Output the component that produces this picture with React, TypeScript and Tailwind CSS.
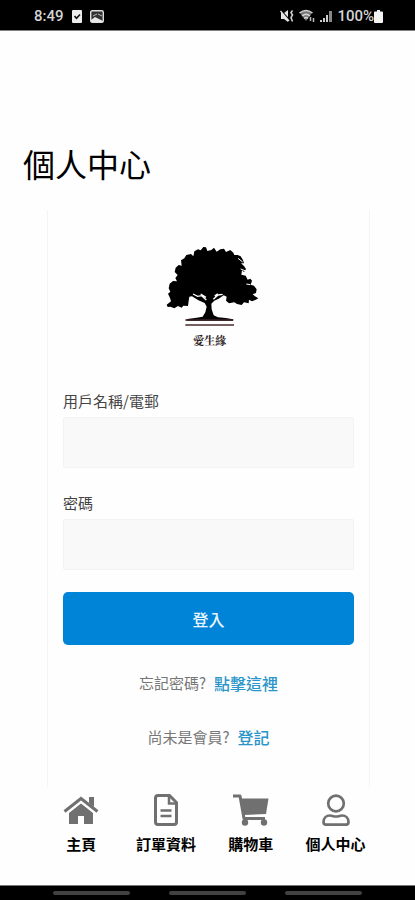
import type { ReactNode } from 'react';

function StatusBar() {
  return (
    <header className="flex h-[31px] items-center justify-between border-b border-[#808080] bg-black pt-0.5 pr-8 pl-[34px] font-['Roboto',sans-serif] text-[15px] leading-5 font-medium text-[#d4d4d4]">
      <div className="flex items-center gap-2">
        <span>8:49</span>
        <svg viewBox="0 0 10 13" className="h-[13px] w-[10px]" aria-hidden="true">
          <rect width="10" height="13" rx="1" fill="#ededed" />
          <path d="M2.500 6l2 2.300L8 4.500" fill="none" stroke="#111" strokeWidth="1.600" />
        </svg>
        <svg viewBox="0 0 14 13" className="h-[13px] w-[14px]" aria-hidden="true">
          <rect x="0.700" y="0.700" width="12.600" height="11.600" rx="1.500" fill="#333" stroke="#dedede" strokeWidth="1.400" />
          <path d="M1 12V10l4-3 3 1.500L13 11v1z" fill="#e8e8e8" />
          <path d="M3 6l4-2M8 4l4 2" stroke="#bbb" />
        </svg>
      </div>
      <div className="flex items-center gap-[5px]">
        <svg viewBox="0 0 14 14" className="h-[14px] w-[14px]" aria-hidden="true">
          <path d="M1 4h3l4-3v12L4 10H1z" fill="#e5e5e5" />
          <path d="M1 1.500l8.500 9.500" stroke="#000" strokeWidth="1.500" />
          <path d="M0.500 2l8.500 10" stroke="#e5e5e5" strokeWidth="1.300" />
          <path d="M12.500 1.500l-1.500 2 1.500 2.500-1.500 2.500 1.500 4" fill="none" stroke="#ccc" strokeWidth="1.600" />
        </svg>
        <svg viewBox="0 0 16 14" className="h-[14px] w-[16px]" aria-hidden="true">
          <path d="M1 4q6-5 12 0L7 12z" fill="#777" />
          <path d="M0.500 4q6.500-5 13 0M3 7q4-3.500 8 0M5 9.500q2-2 4 0" fill="none" stroke="#d5d5d5" strokeWidth="1.500" />
          <path d="M11.500 8v4M14.500 9v4" stroke="#bbb" strokeWidth="1.500" />
        </svg>
        <svg viewBox="0 0 12 14" className="h-[14px] w-[12px]" aria-hidden="true">
          <path d="M0 11h2v2H0zM3 9h2v4H3zM6 6h2v7H6z" fill="#ccc" />
          <path d="M9 2h3v11H9z" fill="#888" />
        </svg>
        <div className="flex items-center">
          <span>100%</span>
          <svg viewBox="0 0 9 13" className="h-[13px] w-[9px]" aria-hidden="true">
            <path d="M3 0h3v1.500h2q1 0 1 1V12q0 1-1 1H1q-1 0-1-1V2.500q0-1 1-1h2z" fill="#f4f4f4" />
          </svg>
        </div>
      </div>
    </header>
  );
}

function Logo() {
  return (
    <svg viewBox="0 0 300 330" className="h-[110px] w-[100px]" role="img" aria-label="愛生緣">
      <path
        d="M14 176L27 166 24 156 18 143 25 137 20 127 23 113 33 105 45 106 40 96 47 87 38 78 41 65 50 57 59 59 57 43 67 37 73 27 87 24 94 31 97 16 108 10 116 13 124 3 132 4 136 15 148 12 156 5 164 17 175 10 186 8 192 18 205 12 214 20 217 27 227 27 236 31 243 42 246 52 237 52 246 60 252 69 246 78 240 73 238 86 251 89 257 101 265 98 270 104 266 116 276 119 284 130 282 141 272 145 279 151 289 157 280 162 270 166 261 161 260 172 246 169 239 177 225 174 217 169 201 172 192 164 194 152 185 148 170 158 157 164 148 173 149 190 155 208 168 214 191 216 213 220 213 224H73L76 219 104 215 122 212 130 199 134 182 128 171 109 163 90 151 82 152 80 165 78 180 64 179 59 185 48 180 37 187 25 182 17 183z"
        fill="#000"
      />
      <path
        d="M93 144L107 151 119 149 133 162M154 160L168 147 182 145M116 144L132 154M158 150L167 143"
        fill="none"
        stroke="#fff"
        strokeWidth="4"
      />
      <path
        d="M228 37L242 48M251 75L236 69M265 116L253 114"
        fill="none"
        stroke="#fff"
        strokeWidth="3"
      />
      <path d="M70 222H214" stroke="#3d2224" strokeWidth="5" />
      <path d="M70 237H216" stroke="#4a292b" strokeWidth="5" />
      <text
        x="143"
        y="297"
        textAnchor="middle"
        fontSize="33"
        fontWeight="700"
        fontFamily="'Noto Serif CJK TC', 'Noto Sans CJK TC', serif"
        fill="#2b2222"
      >
        愛生緣
      </text>
    </svg>
  );
}

function Field({ id, label, type }: { id: string; label: string; type: string }) {
  return (
    <div className="mb-[22px]">
      <label htmlFor={id} className="block h-[29px] text-[15px] leading-[26px] text-[#444]">
        {label}
      </label>
      <input
        id={id}
        type={type}
        className="block h-[51px] w-full rounded-xs border border-[#f3f3f3] bg-[#f9f9f9] px-3 text-base outline-none"
      />
    </div>
  );
}

function LinkRow({ question, link }: { question: string; link: string }) {
  return (
    <p className="flex h-[54px] items-center justify-center gap-2 text-[15px] text-[#777]">
      <span>{question}</span>
      <a href="#" className="text-base font-medium text-[#2b95c9]">
        {link}
      </a>
    </p>
  );
}

function HomeIcon() {
  return (
    <svg viewBox="0 0 36 32" className="h-8 w-9" fill="currentColor" aria-hidden="true">
      <path d="M26 3h5v10l-5-4z" />
      <path d="M1.500 17.500L18 4.500l16.500 13" fill="none" stroke="currentColor" strokeWidth="3" />
      <path d="M18 9.500l12 9.500v11h-9v-8h-6v8H6V19z" />
    </svg>
  );
}

function DocumentIcon() {
  return (
    <svg viewBox="0 0 24 32" className="h-8 w-6" fill="none" stroke="currentColor" aria-hidden="true">
      <path d="M4 1.500h11.500l7 7V28q0 2.500-2.500 2.500H4Q1.500 30.500 1.500 28V4Q1.500 1.500 4 1.500z" strokeWidth="3" />
      <path d="M15 2v7.500h7.500" strokeWidth="2.500" />
      <path d="M6.500 16.500h11M6.500 22h11" strokeWidth="2.500" />
    </svg>
  );
}

function CartIcon() {
  return (
    <svg viewBox="0 0 36 32" className="h-8 w-9" fill="currentColor" aria-hidden="true">
      <path d="M0 2h7l4 22.500h21" fill="none" stroke="currentColor" strokeWidth="3" strokeLinejoin="round" />
      <path d="M7 4.500h28.500L33 20l-23 1z" />
      <circle cx="12" cy="28.500" r="3.200" />
      <circle cx="31" cy="28.500" r="3.200" />
    </svg>
  );
}

function UserIcon() {
  return (
    <svg viewBox="0 0 28 32" className="h-8 w-7" fill="none" stroke="currentColor" strokeWidth="2.700" aria-hidden="true">
      <circle cx="14" cy="9.500" r="7.800" />
      <path
        d="M8 21.500c2 0 3 1 6 1s4-1 6-1c4 0 6.500 3 6.500 6.500q0 2.700-2.500 2.700H4q-2.500 0-2.500-2.700C1.500 24.500 4 21.500 8 21.500z"
        strokeLinejoin="round"
      />
    </svg>
  );
}

function NavItem({ label, icon }: { label: string; icon: ReactNode }) {
  return (
    <a href="#" className="flex flex-col items-center text-[#707070]">
      {icon}
      <span className="mt-2 text-[15px] leading-5 font-bold whitespace-nowrap text-black">{label}</span>
    </a>
  );
}

export default function App() {
  return (
    <div className="flex min-h-screen flex-col bg-[#fefefe] font-['Noto_Sans_CJK_TC',sans-serif]">
      <StatusBar />
      <main className="flex grow flex-col">
        <h1 className="mt-[108px] ml-[23px] text-[32px] leading-12 text-black">個人中心</h1>
        <form
          className="mr-[45px] ml-[47px] mt-[23px] border-x border-[#f4f4f4] px-[15px] pt-9 pb-[23px]"
          onSubmit={(event) => event.preventDefault()}
        >
          <div className="flex justify-center pl-1.5">
            <Logo />
          </div>
          <div className="pt-8">
            <Field id="account" label="用戶名稱/電郵" type="text" />
            <Field id="password" label="密碼" type="password" />
          </div>
          <button
            type="submit"
            className="mb-[11px] block h-[53px] w-full rounded-[5px] bg-[#0084d8] text-base font-medium text-[#e8f6ff]"
          >
            登入
          </button>
          <LinkRow question="忘記密碼?" link="點擊這裡" />
          <LinkRow question="尚未是會員?" link="登記" />
        </form>
      </main>
      <nav className="mr-[37px] ml-[39px] grid h-[98px] grid-cols-4 pt-[7px]">
        <NavItem label="主頁" icon={<HomeIcon />} />
        <NavItem label="訂單資料" icon={<DocumentIcon />} />
        <NavItem label="購物車" icon={<CartIcon />} />
        <NavItem label="個人中心" icon={<UserIcon />} />
      </nav>
      <footer className="flex h-[15px] items-center justify-center gap-[39px] border-t border-[#777] bg-black">
        <span className="h-1 w-[77px] rounded-full bg-[#414141]" />
        <span className="h-1 w-[77px] rounded-full bg-[#414141]" />
        <span className="h-1 w-[77px] rounded-full bg-[#414141]" />
      </footer>
    </div>
  );
}
